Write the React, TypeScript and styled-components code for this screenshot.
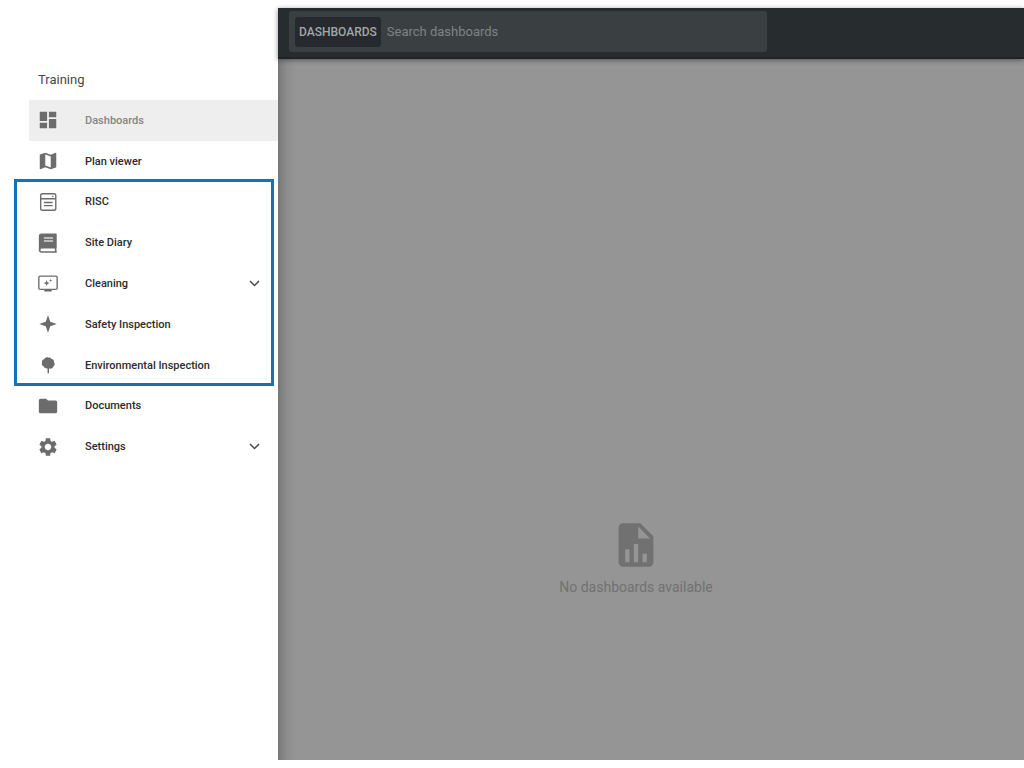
import React from "react";
import styled, { createGlobalStyle } from "styled-components";
import { MdDashboard, MdFolder, MdSettings } from "react-icons/md";

const GlobalStyle = createGlobalStyle`
  * { box-sizing: border-box; }
  body {
    margin: 0;
    background: #fff;
    font-family: Roboto, "Liberation Sans", sans-serif;
  }
`;

const Shell = styled.div`
  display: flex;
  min-height: 100vh;
  padding: 8px 0;
`;

const Drawer = styled.aside`
  flex: 0 0 278px;
  padding-top: 62px;
`;

const ProjectName = styled.h1`
  margin: 0;
  padding-left: 38px;
  height: 30px;
  line-height: 20px;
  font-size: 13px;
  font-weight: 400;
  color: #484848;
`;

const Menu = styled.nav`
  display: grid;
  grid-template-rows: 2fr 5fr 2fr;
  height: 367px;
`;

const Section = styled.div<{ $highlighted?: boolean }>`
  display: grid;
  grid-auto-rows: 1fr;
  position: relative;

  &::after {
    content: "";
    display: ${(p) => (p.$highlighted ? "block" : "none")};
    position: absolute;
    inset: -3px 4px -1px 14px;
    border: 3px solid #1672b5;
    pointer-events: none;
  }
`;

const Entry = styled.a<{ $active?: boolean }>`
  display: flex;
  align-items: center;
  margin: 0 0 0 29px;
  padding: 0 18px 0 8px;
  border: 0;
  background: ${(p) => (p.$active ? "#eeeeee" : "transparent")};
  color: ${(p) => (p.$active ? "#858585" : "#2c2c2c")};
  font-family: inherit;
  font-size: 11px;
  font-weight: 500;
  text-align: left;
  text-decoration: none;
  cursor: pointer;
`;

const EntryIcon = styled.span`
  display: flex;
  width: 48px;
  color: #6c6c6c;

  svg {
    width: 22px;
    height: 22px;
  }
`;

const EntryLabel = styled.span`
  flex: 1;
`;

const Chevron = styled.svg`
  width: 11px;
  height: 7px;
`;

const Main = styled.main`
  flex: 1;
  min-width: 0;
  display: flex;
  flex-direction: column;
  background: linear-gradient(to right, #757575 0, #808080 3px, #8d8d8d 9px, #959595 18px);
`;

const TopBar = styled.header`
  height: 51px;
  padding: 3px 11px;
  background: #272c2f;
  border-bottom: 2px solid #1d2326;
  box-shadow: 0 1px 5px rgba(0, 0, 0, 0.45);
`;

const SearchBox = styled.form`
  display: flex;
  align-items: center;
  width: 66%;
  height: 41px;
  padding: 0 6px;
  border-radius: 3px;
  background: #3a4042;
`;

const ScopeButton = styled.button`
  height: 30px;
  padding: 0 4px;
  border: 0;
  border-radius: 3px;
  background: #262a2f;
  color: #a3a5a6;
  font: 500 12px Roboto, sans-serif;
`;

const SearchInput = styled.input`
  flex: 1;
  min-width: 0;
  padding: 0 6px;
  border: 0;
  outline: 0;
  background: transparent;
  color: #a3a5a6;
  font: 400 13px Roboto, sans-serif;

  &::placeholder {
    color: #7f8384;
    opacity: 1;
  }
`;

const EmptyState = styled.section`
  display: flex;
  flex-direction: column;
  align-items: center;
  gap: 6px;
  padding: 460px 30px 0 0;
  color: #717171;

  svg {
    width: 52px;
    height: 52px;
  }
`;

const EmptyText = styled.p`
  margin: 0;
  font-size: 14px;
  line-height: 20px;
`;

const MapIcon = () => (
  <svg viewBox="0 0 24 24" fill="currentColor" aria-hidden="true">
    <path
      fillRule="evenodd"
      d="M20.5 3l-.2 0L15 5.1 9 3 3.400 4.900c-.2.1-.4.300-.4.500v15.100c0 .3.200.5.500.5l.200 0L9 18.900l6 2.100 5.600-1.900c.2-.1.400-.3.400-.5V3.500c0-.3-.2-.5-.5-.5zM15 19l-6-2.100V5l6 2.100z"
    />
  </svg>
);

const FormIcon = () => (
  <svg viewBox="0 0 24 24" fill="none" stroke="currentColor" strokeWidth="1.5" aria-hidden="true">
    <rect x="4" y="3" width="16.500" height="18" rx="2" />
    <path d="M4 8.500h16.500M7.500 12.500h9.500M7.500 16h9.500" />
    <path d="M16.500 5.800h1.500" />
  </svg>
);

const DiaryIcon = () => (
  <svg viewBox="0 0 24 24" aria-hidden="true">
    <path fill="#6c6c6c" d="M5 1.500h15.500a1 1 0 0 1 1 1v14.500q-.8 2 0 4v1.500H5a3 3 0 0 1-3-3v-15a3 3 0 0 1 3-3z" />
    <path fill="#fff" d="M5.300 18h14.200v3H5.300a1.500 1.500 0 0 1 0-3z" />
    <path fill="none" stroke="#d5d5d5" strokeWidth="1.500" d="M7.500 6.500h10M7.500 9.800h10" />
  </svg>
);

const ScreenIcon = () => (
  <svg viewBox="0 0 24 24" fill="none" stroke="currentColor" strokeWidth="1.500" aria-hidden="true">
    <rect x="2" y="4.500" width="20" height="14.500" rx="1.500" />
    <path d="M8 20.300h8" strokeWidth="2" />
    <path fill="currentColor" stroke="none" d="M10.500 8.800l.9 2.400 2.400.9-2.400.9-.9 2.400-.9-2.400-2.400-.9 2.400-.9zM14.800 7.500l.5 1.200 1.200.5-1.200.5-.5 1.200-.5-1.200-1.200-.5 1.200-.5z" />
  </svg>
);

const SparkIcon = () => (
  <svg viewBox="0 0 24 24" fill="currentColor" aria-hidden="true">
    <path d="M12 2.500l2.500 7 7 2.500-7 2.500-2.500 7-2.500-7-7-2.500 7-2.500z" />
  </svg>
);

const TreeIcon = () => (
  <svg viewBox="0 0 24 24" fill="currentColor" aria-hidden="true">
    <path d="M12.500 4c1.600-.3 2.700.4 3.300 1.500 1.900.1 3 1.600 2.700 3.200 1.300 1.500 1 3.900-.7 4.800-.5 1.800-2.600 2.900-4.700 2.300V21h-1.600v-5.300c-1.900.3-3.600-.4-4.100-2-1.900-.6-2.800-2.600-1.900-4.300-.5-2 .7-3.800 2.500-4 1.100-1.700 3.100-2.300 4.500-1.400z" />
  </svg>
);

const ReportIcon = () => (
  <svg viewBox="0 0 24 24" fill="currentColor" aria-hidden="true">
    <path
      fillRule="evenodd"
      d="M6 2a2 2 0 0 0-2 2v16a2 2 0 0 0 2 2h12a2 2 0 0 0 2-2V8l-6-6zM13 3.500v5.500h5.500zM7 20v-6h2v6zM11 20v-8.500h2V20zM15 20v-4h2v4z"
    />
  </svg>
);

type Item = {
  label: string;
  icon: React.ReactNode;
  active?: boolean;
  expandable?: boolean;
};

const sections: { id: string; highlighted?: boolean; items: Item[] }[] = [
  {
    id: "overview",
    items: [
      { label: "Dashboards", icon: <MdDashboard />, active: true },
      { label: "Plan viewer", icon: <MapIcon /> },
    ],
  },
  {
    id: "modules",
    highlighted: true,
    items: [
      { label: "RISC", icon: <FormIcon /> },
      { label: "Site Diary", icon: <DiaryIcon /> },
      { label: "Cleaning", icon: <ScreenIcon />, expandable: true },
      { label: "Safety Inspection", icon: <SparkIcon /> },
      { label: "Environmental Inspection", icon: <TreeIcon /> },
    ],
  },
  {
    id: "system",
    items: [
      { label: "Documents", icon: <MdFolder /> },
      { label: "Settings", icon: <MdSettings />, expandable: true },
    ],
  },
];

const MenuEntry = ({ label, icon, active, expandable }: Item) => {
  const content = (
    <>
      <EntryIcon>{icon}</EntryIcon>
      <EntryLabel>{label}</EntryLabel>
      {expandable && (
        <Chevron viewBox="0 0 11 7" fill="none" stroke="#484848" strokeWidth="1.500" aria-hidden="true">
          <path d="M1 1l4.500 4.500L10 1" />
        </Chevron>
      )}
    </>
  );
  return expandable ? (
    <Entry as="button" type="button" aria-expanded={false}>
      {content}
    </Entry>
  ) : (
    <Entry href="#" $active={active} aria-current={active ? "page" : undefined}>
      {content}
    </Entry>
  );
};

export default function App() {
  return (
    <>
      <GlobalStyle />
      <Shell>
        <Drawer>
          <ProjectName>Training</ProjectName>
          <Menu aria-label="Main">
            {sections.map((section) => (
              <Section key={section.id} $highlighted={section.highlighted}>
                {section.items.map((item) => (
                  <MenuEntry key={item.label} {...item} />
                ))}
              </Section>
            ))}
          </Menu>
        </Drawer>
        <Main>
          <TopBar>
            <SearchBox role="search">
              <ScopeButton type="button">DASHBOARDS</ScopeButton>
              <SearchInput type="search" placeholder="Search dashboards" aria-label="Search dashboards" />
            </SearchBox>
          </TopBar>
          <EmptyState>
            <ReportIcon />
            <EmptyText>No dashboards available</EmptyText>
          </EmptyState>
        </Main>
      </Shell>
    </>
  );
}
